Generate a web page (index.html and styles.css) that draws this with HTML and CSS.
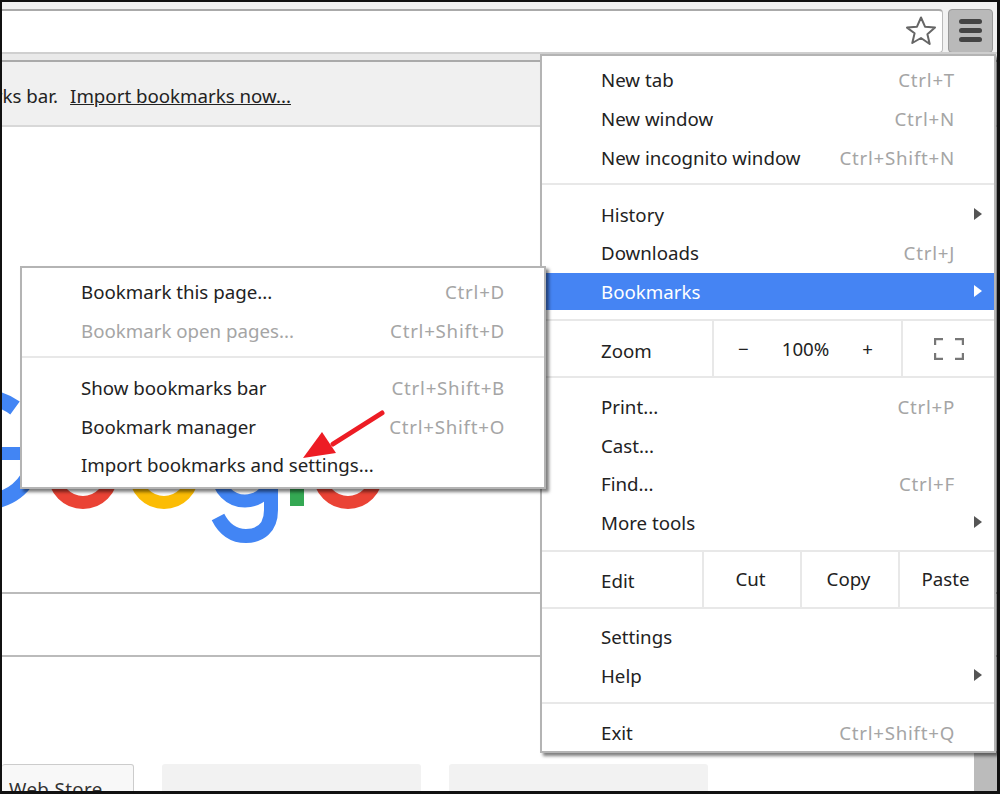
FILE: index.html
```html
<!DOCTYPE html>
<html lang="en">
<head>
<meta charset="utf-8">
<title>Chrome bookmarks menu</title>
<link rel="stylesheet" href="styles.css">
</head>
<body>
<div class="frame">
  <header class="toolbar">
    <div class="omnibox">
      <svg class="star" viewBox="0 0 32 32" width="32" height="32"><path d="M16 2.5l4 9.2 10 .9-7.6 6.6 2.3 9.8L16 23l-8.7 5 2.3-9.8L2 12.6l10-.9z" fill="#fff" stroke="#666" stroke-width="2" stroke-linejoin="round"/></svg>
    </div>
    <div class="hamburger"><span></span><span></span><span></span></div>
  </header>
  <div class="bar-strip"></div>
  <div class="infobar">
    <span class="info-text">Show your bookmarks here on the bookmarks bar.</span>
    <span class="info-link">Import bookmarks now...</span>
  </div>
  <main class="content">
    <svg class="logo" viewBox="2 390 400 170" width="400" height="170">
      <path d="M15 408A52 52 0 1 0 28 478" fill="none" stroke="#4285f4" stroke-width="16"/>
      <rect x="0" y="447" width="30" height="13" fill="#4285f4"/>
      <circle cx="83" cy="474" r="28.5" fill="none" stroke="#ea4335" stroke-width="13"/>
      <circle cx="164" cy="474" r="28.5" fill="none" stroke="#fbbc05" stroke-width="13"/>
      <circle cx="245" cy="474" r="27" fill="none" stroke="#4285f4" stroke-width="13"/>
      <path d="M271 440V510C271 528 260 536 246 536C233 536 224 529 218 517" fill="none" stroke="#4285f4" stroke-width="14"/>
      <rect x="290" y="440" width="14" height="66" fill="#34a853"/>
      <circle cx="348" cy="474" r="28.5" fill="none" stroke="#ea4335" stroke-width="13"/>
    </svg>
    <div class="search-strip"></div>
    <div class="tiles">
      <div class="tile tile-store">Web Store</div>
      <div class="tile"></div>
      <div class="tile"></div>
    </div>
  </main>
  <div class="scrollbar"></div>

  <nav class="menu main-menu">
    <section class="group group-first">
      <div class="row"><span>New tab</span><span class="key">Ctrl+T</span></div>
      <div class="row"><span>New window</span><span class="key">Ctrl+N</span></div>
      <div class="row"><span>New incognito window</span><span class="key">Ctrl+Shift+N</span></div>
    </section>
    <section class="group">
      <div class="row"><span>History</span><i class="caret"></i></div>
      <div class="row"><span>Downloads</span><span class="key">Ctrl+J</span></div>
      <div class="row active"><span>Bookmarks</span><i class="caret"></i></div>
    </section>
    <section class="strip zoom-strip">
      <span class="strip-label">Zoom</span>
      <div class="zoom-controls"><span>−</span><span>100%</span><span>+</span></div>
      <div class="fullscreen">
        <svg viewBox="0 0 30 22" width="30" height="22"><path d="M1 7V1h8M21 1h8v6M29 15v6h-8M9 21H1v-6" fill="none" stroke="#777" stroke-width="2.4"/></svg>
      </div>
    </section>
    <section class="group group-tools">
      <div class="row"><span>Print...</span><span class="key">Ctrl+P</span></div>
      <div class="row"><span>Cast...</span></div>
      <div class="row"><span>Find...</span><span class="key">Ctrl+F</span></div>
      <div class="row"><span>More tools</span><i class="caret"></i></div>
    </section>
    <section class="strip edit-strip">
      <span class="strip-label">Edit</span>
      <span class="edit-btn">Cut</span>
      <span class="edit-btn">Copy</span>
      <span class="edit-btn">Paste</span>
    </section>
    <section class="group group-settings">
      <div class="row"><span>Settings</span></div>
      <div class="row"><span>Help</span><i class="caret"></i></div>
    </section>
    <section class="group group-last">
      <div class="row"><span>Exit</span><span class="key">Ctrl+Shift+Q</span></div>
    </section>
  </nav>

  <nav class="menu sub-menu">
    <section class="group group-first">
      <div class="row"><span>Bookmark this page...</span><span class="key">Ctrl+D</span></div>
      <div class="row disabled"><span>Bookmark open pages...</span><span class="key">Ctrl+Shift+D</span></div>
    </section>
    <section class="group group-last">
      <div class="row"><span>Show bookmarks bar</span><span class="key">Ctrl+Shift+B</span></div>
      <div class="row"><span>Bookmark manager</span><span class="key">Ctrl+Shift+O</span></div>
      <div class="row"><span>Import bookmarks and settings...</span></div>
    </section>
  </nav>

  <svg class="arrow" viewBox="0 0 90 56" width="90" height="56">
    <path d="M79 3L30 34" fill="none" stroke="#ed1c24" stroke-width="5" stroke-linecap="round"/>
    <path d="M0 48L19 22L33 43z" fill="#ed1c24"/>
  </svg>
</div>
</body>
</html>
```
FILE: styles.css
```css
* { box-sizing: border-box; }
html, body { margin: 0; padding: 0; }
body {
  width: 1000px;
  height: 794px;
  overflow: hidden;
  background: #fff;
  font-family: "Noto Sans", "Open Sans", sans-serif;
  font-size: 18.7px;
  color: #222;
}
.frame {
  position: relative;
  width: 1000px;
  height: 794px;
  border-style: solid;
  border-color: #111;
  border-width: 2px 3px 3px 2px;
  overflow: hidden;
  display: flex;
  flex-direction: column;
}
.toolbar {
  height: 50px;
  flex: none;
  display: flex;
  align-items: flex-start;
  gap: 5px;
  padding: 7px 4px 0 0;
  background: #f2f2f2;
}
.omnibox {
  flex: 1;
  height: 44px;
  background: #fff;
  border: 1px solid #bbb;
  border-left: 0;
  border-top: 2px solid #aaa;
  border-radius: 0 4px 4px 0;
  display: flex;
  align-items: center;
  justify-content: flex-end;
  padding: 0 5px 2px 0;
}
.star { display: block; }
.hamburger {
  width: 45px;
  height: 44px;
  border: 1px solid #999;
  border-radius: 4px;
  background: #b9b9b9;
  display: flex;
  flex-direction: column;
  align-items: center;
  justify-content: center;
  gap: 4px;
  padding-bottom: 2px;
}
.hamburger span {
  display: block;
  width: 23px;
  height: 5px;
  border-radius: 2.5px;
  background: #444;
}
.bar-strip {
  height: 10px;
  flex: none;
  background: #e9e9e9;
  border-top: 2px solid #cfcfcf;
  border-bottom: 2px solid #aaa;
}
.infobar {
  height: 65px;
  flex: none;
  display: flex;
  justify-content: flex-end;
  align-items: center;
  gap: 12px;
  padding: 3px 706px 0 0;
  white-space: nowrap;
  overflow: hidden;
  background: #f0f0f0;
  border-bottom: 2px solid #d8d8d8;
}
.info-text { flex: none; }
.info-link { flex: none; text-decoration: underline; }
.content {
  flex: 1;
  display: flex;
  flex-direction: column;
  overflow: hidden;
}
.logo { display: block; flex: none; margin-top: 263px; margin-bottom: 32px; }
.search-strip {
  height: 65px;
  flex: none;
  border-top: 2px solid #bbb;
  border-bottom: 2px solid #bbb;
}
.tiles {
  display: flex;
  gap: 28px;
  margin-top: 107px;
  height: 40px;
  flex: none;
}
.tile {
  width: 259px;
  flex: none;
  background: #f2f2f2;
  border-radius: 3px 3px 0 0;
}
.tile-store {
  width: 132px;
  padding: 11px 0 0 7px;
  border: 1px solid #ccc;
  border-left: 0;
  background: #f8f8f8;
  color: #333;
  letter-spacing: .4px;
}
.scrollbar {
  position: absolute;
  right: 0;
  bottom: 0;
  width: 23px;
  height: 40px;
  background: #bbb;
}

.menu {
  position: absolute;
  background: #fff;
  border: 2px solid #b4b4b4;
  box-shadow: 3px 3px 3px rgba(0, 0, 0, .5);
  white-space: nowrap;
}
.main-menu {
  left: 538px;
  top: 52px;
  width: 456px;
  height: 699px;
}
.sub-menu {
  left: 18px;
  top: 264px;
  width: 526px;
  height: 223px;
}
.group {
  display: flex;
  flex-direction: column;
  gap: 1.8px;
  padding: 11px 0 9px;
  border-bottom: 2px solid #e8e8e8;
}
.group-first { padding-top: 5px; padding-bottom: 7px; }
.group-tools { padding: 10px 0 9px; gap: 1.5px; }
.group-settings { padding: 9px 0 8px; gap: 2.5px; }
.group-last { border-bottom: 0; padding-top: 10px; }
.sub-menu .group-last { padding-top: 11px; }
.row {
  height: 37px;
  flex: none;
  display: flex;
  align-items: center;
  justify-content: space-between;
  padding: 0 39px 0 59px;
  position: relative;
}
.key { color: #a5a5a5; letter-spacing: .75px; }
.caret {
  position: absolute;
  right: 12px;
  top: 12px;
  width: 0;
  height: 0;
  border-left: 8px solid #555;
  border-top: 6.5px solid transparent;
  border-bottom: 6.5px solid transparent;
}
.active { background: #4584f3; color: #fff; }
.active .caret { border-left-color: #fff; }
.disabled, .disabled .key { color: #a5a5a5; }

.strip {
  display: flex;
  align-items: stretch;
  border-bottom: 2px solid #e8e8e8;
}
.strip-label {
  display: flex;
  align-items: center;
  padding-left: 59px;
  flex: none;
}
.zoom-strip { height: 57px; }
.zoom-strip .strip-label { width: 170px; padding-top: 3px; }
.zoom-controls {
  width: 191px;
  border-left: 2px solid #e8e8e8;
  border-right: 2px solid #e8e8e8;
  display: flex;
  align-items: center;
  justify-content: space-between;
  padding: 0 28px 0 24px;
}
.fullscreen {
  flex: 1;
  display: flex;
  align-items: center;
  justify-content: center;
}
.edit-strip { height: 57px; }
.edit-strip .strip-label { width: 160px; padding-top: 2px; }
.edit-btn {
  width: 98px;
  flex: none;
  display: flex;
  align-items: center;
  justify-content: center;
  border-left: 2px solid #e8e8e8;
  padding: 0 3px 1px 0;
}
.edit-btn:last-child { flex: 1; }

.arrow {
  position: absolute;
  left: 301px;
  top: 408px;
}
```
